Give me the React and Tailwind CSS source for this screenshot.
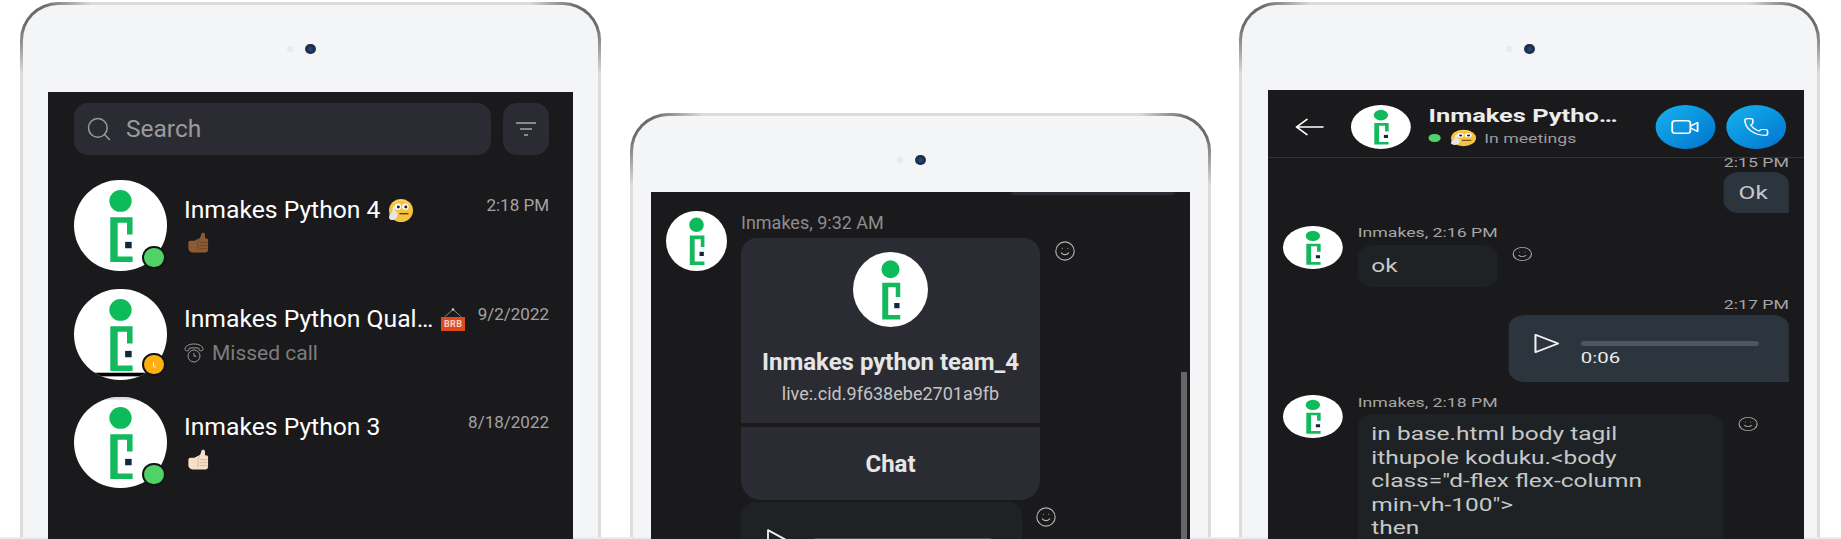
import React from "react";
import { Search, Smile, Phone } from "lucide-react";

function Logo({ band, topShade }) {
  return (
    <svg viewBox="0 0 100 100" preserveAspectRatio="none" className="block w-full h-full">
      <circle cx="50" cy="23" r="12" fill="#0dbb5b" />
      <path d="M39 41H63V60H57V47H47V84H63V90H39Z" fill="#14b95e" />
      <rect x="55" y="68" width="7" height="7" fill="#10283a" />
      {band && <rect x="0" y="92" width="100" height="4" fill="#000" />}
      {topShade && <rect x="0" y="0" width="100" height="3" fill="#dcdcdc" />}
    </svg>
  );
}

function Avatar({ className, band, topShade }) {
  return (
    <div className={`rounded-full bg-white overflow-hidden shrink-0 ${className}`}>
      <Logo band={band} topShade={topShade} />
    </div>
  );
}

function ThinkingFace({ className }) {
  return (
    <svg viewBox="0 0 26 26" preserveAspectRatio="none" className={className}>
      <circle cx="14" cy="13" r="12" fill="#f5c33f" />
      <path d="M4 8a12 12 0 0 1 20 0a12 14 0 0 0-20 0z" fill="#fbe08a" />
      <circle cx="11" cy="9" r="3.2" fill="#fff" />
      <circle cx="18.5" cy="9" r="3.2" fill="#fff" />
      <circle cx="11.3" cy="9.4" r="1.5" fill="#222" />
      <circle cx="18.8" cy="9.4" r="1.5" fill="#222" />
      <rect x="12.5" y="15.6" width="9" height="1.4" fill="#5b3a10" />
      <path d="M2 20c0-3 1.500-4 3-5l1-6c.3-1 1.700-1 2 0l.3 5c2 .4 2.700 2 2.200 4c-.5 3-2.500 5-5 5c-2 0-3.500-1-3.500-3z" fill="#e6e6e6" />
    </svg>
  );
}

function Thumb({ skin, shade, className }) {
  return (
    <svg viewBox="0 0 24 24" className={className}>
      <path d="M1 12.500c0-1.500 1-2.500 2.500-2.500H8l6.500-3.500L16 2c.5-1.500 4-1.500 4 1v4h1c1.700 0 2.500 1 2.500 2.500V20c0 2-1.200 3.500-3 3.500H7c-3 0-6-2-6-5z" fill={skin} />
      <path d="M14 12h9M14 15.500h9M14 19h9" stroke={shade} strokeWidth="0.9" fill="none" />
      <path d="M14 8.500c-1.500 1-2 2.500-2 4v8" stroke={shade} strokeWidth="0.9" fill="none" />
    </svg>
  );
}

function Brb() {
  return (
    <span className="relative ml-[8px] inline-flex flex-col items-center w-[24px] h-[23px] shrink-0">
      <svg viewBox="0 0 24 9" className="block w-[24px] h-[9px]">
        <circle cx="12" cy="1.500" r="1.300" fill="#c9c9c9" />
        <path d="M12 1.500L3.500 9M12 1.500L20.500 9" stroke="#a8a8a8" strokeWidth="0.8" fill="none" />
      </svg>
      <span className="flex items-center justify-center w-[24px] h-[14px] bg-[#dc4a1d] text-[#f7d7c8] text-[9px] leading-[14px] font-bold tracking-[0.3px]">BRB</span>
    </span>
  );
}

function MissedIcon() {
  return (
    <svg viewBox="0 0 20 20" className="w-[20px] h-[20px] shrink-0" fill="none" stroke="#9a9a9a" strokeWidth="1">
      <path d="M1 6.500C1 3 5 1 10 1s9 2 9 5.500c0 1-1 1.300-2.200 1.300S15 7.500 15 6.500V5.300C13.500 4.700 6.500 4.700 5 5.300v1.200c0 1-.6 1.300-1.800 1.300S1 7.500 1 6.500z" />
      <circle cx="10" cy="13" r="6" />
      <path d="M10 10v3.200h2.400" />
    </svg>
  );
}

function ChatRow({ title, time, band, topShade, badge, emoji, children, rowClass }) {
  return (
    <div className={`flex h-[91px] ${rowClass}`}>
      <div className="relative w-[93px] h-[91px] shrink-0">
        <Avatar className="w-[93px] h-[91px]" band={band} topShade={topShade} />
        {badge === "green" && (
          <span className="absolute left-[68px] top-[66px] w-[24px] h-[23px] rounded-full bg-[#4fd266] border-[2px] border-[#141416]" />
        )}
        {badge === "away" && (
          <span className="absolute left-[68px] top-[64px] w-[24px] h-[23px] rounded-full bg-[#fdb00f] border-[2px] border-[#141416] flex items-center justify-center">
            <svg viewBox="0 0 10 10" className="w-[10px] h-[10px]" fill="none" stroke="#fff" strokeWidth="1">
              <path d="M4.500 2v4l2 1.500" />
            </svg>
          </span>
        )}
      </div>
      <div className="ml-[17px] flex-1 min-w-0">
        <div className="flex justify-between">
          <div className="flex items-center h-[32px] mt-[14px] text-[24.7px] leading-[32px] text-white whitespace-nowrap">
            {title}
            {emoji}
          </div>
          <div className="mt-[13px] text-[17px] leading-[24px] text-[#a3a3a3]">{time}</div>
        </div>
        {children}
      </div>
    </div>
  );
}

function Tablet({ margin, gapClass, children }) {
  return (
    <div className={`w-[581px] shrink-0 rounded-t-[38px] pt-[3px] px-[3px] flex bg-[radial-gradient(circle_at_0_0,#6b6b6b_24px,transparent_72px),radial-gradient(circle_at_100%_0,#6b6b6b_24px,transparent_72px),linear-gradient(#dcdcdc,#dcdcdc)] ${margin}`}>
      <div className="flex-1 min-w-0 rounded-t-[35px] bg-[#f4f5f7] flex flex-col">
        <div className={`pt-[39px] flex justify-center ${gapClass}`}>
          <div className="relative w-[11px] h-[10px] rounded-full bg-[radial-gradient(circle,#1c4f9e_0,#1c2c48_50%,#3a3f46_80%)]">
            <span className="absolute -left-[18px] top-[2px] w-[6px] h-[6px] rounded-full bg-[#e8eaed]" />
          </div>
        </div>
        {children}
      </div>
    </div>
  );
}

function ChatListScreen() {
  return (
    <div className="ml-[25px] mr-[25px] flex-1 -mb-[2px] bg-[#1a1a1c] overflow-hidden pl-[26px] pr-[24px] pt-[11px]">
      <div className="flex gap-[12px] h-[52px]">
        <div className="flex-1 rounded-[14px] bg-[#2b2c33] flex items-center pl-[11px] text-[#9a9a9a]">
          <Search size={28} strokeWidth={1.3} />
          <span className="ml-[13px] mt-[1px] text-[24.500px]">Search</span>
        </div>
        <div className="w-[46px] rounded-[14px] bg-[#2b2c33] flex items-center justify-center">
          <svg viewBox="0 0 20 16" className="w-[20px] h-[16px]" fill="none" stroke="#a8a8a8" strokeWidth="1.300">
            <path d="M0 2h20M4 8h12M8 14h4" />
          </svg>
        </div>
      </div>
      <div className="mt-[25px]">
        <ChatRow
          rowClass="mb-[18px]"
          title="Inmakes Python 4"
          time="2:18 PM"
          badge="green"
          emoji={<ThinkingFace className="ml-[7px] w-[26px] h-[25px] shrink-0" />}
        >
          <Thumb skin="#8c5a34" shade="#6a4123" className="mt-[6px] ml-[2px] w-[24px] h-[21px]" />
        </ChatRow>
        <ChatRow
          rowClass="mb-[17px]"
          title="Inmakes Python Qual…"
          time="9/2/2022"
          band
          badge="away"
          emoji={<Brb />}
        >
          <div className="mt-[6px] flex items-center">
            <MissedIcon />
            <span className="ml-[8px] text-[21px] leading-[24px] text-[#7d7d7d]">Missed call</span>
          </div>
        </ChatRow>
        <ChatRow title="Inmakes Python 3" time="8/18/2022" topShade badge="green">
          <Thumb skin="#f5dfc8" shade="#cdb59c" className="mt-[6px] ml-[2px] w-[24px] h-[21px]" />
        </ChatRow>
      </div>
    </div>
  );
}

function PlayIcon({ className }) {
  return (
    <svg viewBox="0 0 24 24" preserveAspectRatio="none" className={className} fill="none" stroke="#f2f2f2" strokeWidth="1.800" strokeLinejoin="round">
      <path d="M2 2L22 12L2 22Z" />
    </svg>
  );
}

function CardScreen() {
  return (
    <div className="relative ml-[18px] mr-[18px] flex-1 -mb-[2px] bg-[#1a1a1c] overflow-hidden">
      <div className="h-[3px] w-[164px] ml-auto mr-[15px] bg-[#2b2c33] rounded-b-[3px]" />
      <div className="flex mt-[16px] pl-[15px]">
        <Avatar className="w-[61px] h-[60px]" />
        <div className="ml-[14px]">
          <div className="h-[24px] mb-[3px] text-[18px] leading-[24px] text-[#8d8d8d]">Inmakes, 9:32 AM</div>
          <div className="flex">
            <div className="w-[299px]">
              <div className="h-[185px] rounded-t-[16px] bg-[#2b2c33] flex flex-col items-center pt-[14px]">
                <Avatar className="w-[75px] h-[75px]" />
                <div className="mt-[19px] text-[24px] leading-[32px] font-bold text-[#e6e6e6]">Inmakes python team_4</div>
                <div className="mt-[4px] text-[18px] leading-[24px] text-[#c4c4c4]">live:.cid.9f638ebe2701a9fb</div>
              </div>
              <div className="mt-[4px] h-[73px] rounded-b-[20px] bg-[#2b2c33] flex items-center justify-center text-[24px] font-bold text-[#e6e6e6]">Chat</div>
            </div>
            <Smile size={22} strokeWidth={1.2} className="ml-[14px] mt-[2px] text-[#b4b4b4]" />
          </div>
          <div className="flex mt-[2px]">
            <div className="w-[281px] h-[80px] rounded-t-[14px] bg-[#1e2225] flex pl-[25px] pt-[26px]">
              <PlayIcon className="w-[24px] h-[26px]" />
              <div className="ml-[24px] mt-[10px] w-[178px] h-[5px] rounded-full bg-[#4a5056]" />
            </div>
            <Smile size={22} strokeWidth={1.2} className="ml-[13px] mt-[4px] text-[#b4b4b4]" />
          </div>
        </div>
      </div>
      <div className="absolute right-[3px] top-[180px] bottom-0 w-[6px] bg-[#666666]" />
    </div>
  );
}

function Meta({ children, className = "" }) {
  return <div className={`h-[16px] text-[13px] leading-[16px] text-[#a6a6a6] whitespace-nowrap ${className}`}>{children}</div>;
}

function ConversationScreen() {
  return (
    <div className="ml-[26px] mr-[13px] flex-1 -mb-[2px] bg-[#1a1a1c] overflow-hidden">
      <div className="w-[394px] h-[460px] origin-top-left scale-x-[1.36]">
        <div className="h-[68px] border-b border-[#333538] flex items-start pt-[15px] pl-[20px] pr-[13px]">
          <svg viewBox="0 0 21 18" className="w-[21px] h-[18px] mt-[13px] shrink-0" fill="none" stroke="#fff" strokeWidth="1.400">
            <path d="M21 9H1M9 1L1 9L9 17" />
          </svg>
          <Avatar className="w-[44px] h-[44px] ml-[20px]" />
          <div className="ml-[13px] flex-1 min-w-0">
            <div className="text-[18.700px] leading-[22px] font-bold text-[#ececec] whitespace-nowrap">Inmakes Pytho…</div>
            <div className="flex items-center mt-[1px]">
              <span className="w-[9px] h-[8px] rounded-full bg-[#4fd266]" />
              <ThinkingFace className="ml-[6px] w-[20px] h-[18px]" />
              <span className="ml-[6px] mt-[3px] text-[13px] leading-[16px] text-[#9b9b9b]">In meetings</span>
            </div>
          </div>
          <div className="flex gap-[8px]">
            <div className="w-[44px] h-[44px] rounded-full bg-[linear-gradient(135deg,#16b4ef,#0072ce)] flex items-center justify-center">
              <svg viewBox="0 0 24 18" className="w-[22px] h-[16px]" fill="none" stroke="#fff" strokeWidth="1.500" strokeLinejoin="round">
                <rect x="1" y="2" width="15" height="14" rx="2.500" />
                <path d="M16 8l6-4v10l-6-4" />
              </svg>
            </div>
            <div className="w-[44px] h-[44px] rounded-full bg-[linear-gradient(135deg,#16b4ef,#0072ce)] flex items-center justify-center">
              <Phone size={20} strokeWidth={1.4} className="text-white" />
            </div>
          </div>
        </div>
        <div className="pl-[11px] pr-[11px] -mt-[3px] relative">
          <Meta className="text-right">2:15 PM</Meta>
          <div className="mt-[1px] ml-auto w-[48px] h-[41px] rounded-t-[12px] rounded-bl-[12px] bg-[#2c353d] pl-[11px] text-[18px] leading-[41px] text-[#c8c8c8]">Ok</div>

          <div className="flex mt-[12px]">
            <Avatar className="w-[44px] h-[43px] mt-[1px]" />
            <div className="ml-[11px] flex-1">
              <Meta>Inmakes, 2:16 PM</Meta>
              <div className="flex mt-[4px]">
                <div className="w-[103px] h-[42px] rounded-[12px] bg-[#1e2225] pl-[10px] text-[18px] leading-[41px] text-[#c8c8c8]">ok</div>
                <Smile size={16} strokeWidth={1.300} className="ml-[10px] mt-[1px] text-[#a8a8a8]" />
              </div>
            </div>
          </div>

          <Meta className="text-right mt-[10px]">2:17 PM</Meta>
          <div className="mt-[2px] ml-auto w-[206px] h-[67px] rounded-t-[12px] rounded-bl-[12px] bg-[#2c353d] flex pl-[18px]">
            <PlayIcon className="mt-[18px] w-[20px] h-[21px] shrink-0" />
            <div className="ml-[15px] w-[131px] pt-[26px]">
              <div className="h-[5px] rounded-full bg-[#4e565e]" />
              <div className="mt-[4px] text-[15px] leading-[16px] text-[#ebebeb]">0:06</div>
            </div>
          </div>

          <div className="flex mt-[13px]">
            <Avatar className="w-[44px] h-[43px]" />
            <div className="ml-[11px] flex-1">
              <Meta>Inmakes, 2:18 PM</Meta>
              <div className="flex mt-[3px]">
                <div className="w-[269px] rounded-t-[12px] bg-[#1e2225] pl-[10px] pt-[8px] pb-[20px] text-[18px] leading-[23.6px] text-[#c8c8c8] whitespace-nowrap">
                  in base.html body tagil
                  <br />
                  ithupole koduku.&lt;body
                  <br />
                  class="d-flex flex-column
                  <br />
                  min-vh-100"&gt;
                  <br />
                  then
                </div>
                <Smile size={16} strokeWidth={1.300} className="ml-[10px] mt-[2px] text-[#a8a8a8]" />
              </div>
            </div>
          </div>
        </div>
      </div>
    </div>
  );
}

export default function App() {
  return (
    <div className="w-[1841px] h-[539px] overflow-hidden bg-white font-['Roboto',sans-serif]">
      <div className="h-[539px] border-b-[2px] border-[#ececec] flex pl-[20px]">
        <Tablet margin="mt-[2px]" gapClass="mb-[38px]">
          <ChatListScreen />
        </Tablet>
        <Tablet margin="mt-[113px] ml-[29px]" gapClass="mb-[27px]">
          <CardScreen />
        </Tablet>
        <Tablet margin="mt-[2px] ml-[28px]" gapClass="mb-[36px]">
          <ConversationScreen />
        </Tablet>
      </div>
    </div>
  );
}
